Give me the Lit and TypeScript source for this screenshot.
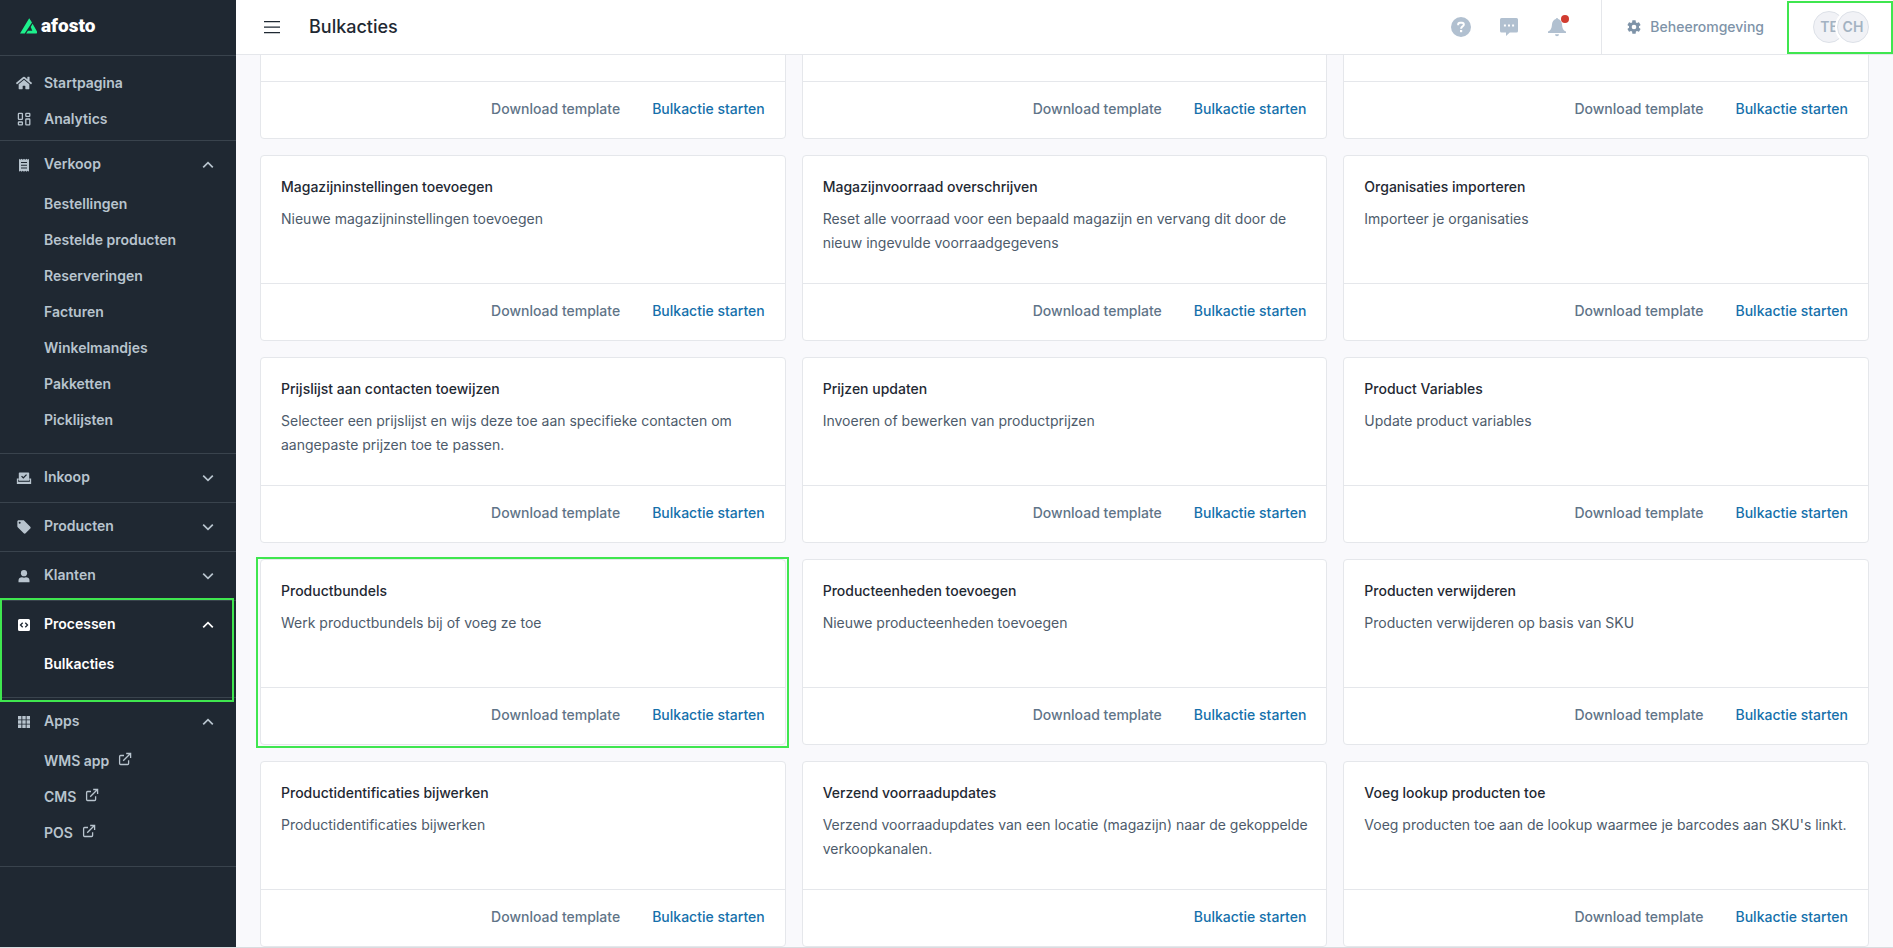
import { LitElement, html, css, svg, nothing } from "lit";
import { customElement, property } from "lit/decorators.js";
import { classMap } from "lit/directives/class-map.js";

const icons: Record<string, { box: string; art: unknown }> = {
  home: {
    box: "0 0 576 512",
    art: svg`<path fill="currentColor" d="M280.37 148.26L96 300.11V464a16 16 0 0 0 16 16l112.06-.29a16 16 0 0 0 15.92-16V368a16 16 0 0 1 16-16h64a16 16 0 0 1 16 16v95.64a16 16 0 0 0 16 16.05L464 480a16 16 0 0 0 16-16V300L295.67 148.26a12.19 12.19 0 0 0-15.3 0zM571.6 251.47L488 182.56V44.05a12 12 0 0 0-12-12h-56a12 12 0 0 0-12 12v72.61L318.47 43a48 48 0 0 0-61 0L4.34 251.47a12 12 0 0 0-1.6 16.9l25.5 31A12 12 0 0 0 45.15 301l235.22-193.74a12.19 12.19 0 0 1 15.3 0L530.9 301a12 12 0 0 0 16.9-1.6l25.5-31a12 12 0 0 0-1.7-16.93z"/>`,
  },
  dashboard: {
    box: "0 0 16 16",
    art: svg`<g fill="none" stroke="currentColor" stroke-width="1.3"><rect x="2.4" y="2.4" width="4" height="6" rx=".6"/><rect x="9.8" y="2.4" width="4" height="3" rx=".6"/><rect x="2.4" y="11" width="4" height="2.8" rx=".6"/><rect x="9.8" y="8" width="4" height="5.8" rx=".6"/></g>`,
  },
  receipt: {
    box: "0 0 16 16",
    art: svg`<path fill="currentColor" fill-rule="evenodd" d="M3 1.8l1.25 1L5.5 1.8l1.25 1L8 1.8l1.25 1 1.25-1 1.25 1 1.25-1v12.9l-1.25-1-1.25 1-1.25-1-1.25 1-1.25-1-1.25 1-1.25-1-1.25 1zM5 5v1.1h6V5zm0 2.7v1.1h6V7.700zm0 2.700v1.100h6v-1.100z"/>`,
  },
  inbox: {
    box: "0 0 16 16",
    art: svg`<path fill="currentColor" fill-rule="evenodd" d="M3.600 2.500h8.800a.8.8 0 0 1 .8.8v7.500H2.800V3.300a.8.8 0 0 1 .8-.8zm3.700 6.300l3.700-3.700-.9-.9-2.800 2.800-1.300-1.300-.9.9z"/><path fill="none" stroke="currentColor" stroke-width="1.300" d="M2.800 9.200H1.500v4.100h13V9.200h-1.300"/><path fill="currentColor" d="M1.500 11.800h13v1.500h-13z"/>`,
  },
  tag: {
    box: "0 0 24 24",
    art: svg`<path fill="currentColor" d="M5.500 7A1.500 1.500 0 1 1 5.500 4a1.500 1.500 0 0 1 0 3m15.910 4.580l-9-9C12.050 2.220 11.550 2 11 2H4c-1.110 0-2 .89-2 2v7c0 .55.220 1.050.590 1.410l9 9c.360.360.860.590 1.410.590s1.050-.230 1.410-.590l7-7c.370-.360.590-.860.590-1.410 0-.560-.230-1.060-.590-1.420"/>`,
  },
  user: {
    box: "0 0 16 16",
    art: svg`<circle cx="8" cy="5.200" r="3.100" fill="currentColor"/><path fill="currentColor" d="M2.500 14.200v-1.700c0-2 1.500-3.200 3.500-3.200.6.300 1.300.5 2 .5s1.400-.2 2-.5c2 0 3.500 1.200 3.500 3.200v1.700z"/>`,
  },
  code: {
    box: "0 0 16 16",
    art: svg`<path fill="currentColor" d="M3.500 2h9A1.500 1.500 0 0 1 14 3.500v9a1.500 1.500 0 0 1-1.500 1.500h-9A1.500 1.500 0 0 1 2 12.500v-9A1.500 1.500 0 0 1 3.500 2z"/><path fill="none" stroke="#1f2832" stroke-width="1.300" d="M6.700 5.800L4.500 8l2.200 2.200M9.300 5.800L11.500 8l-2.200 2.200"/>`,
  },
  grid: {
    box: "0 0 16 16",
    art: svg`<path fill="currentColor" d="M2 2h3.400v3.400H2zm4.300 0h3.400v3.400H6.300zm4.300 0H14v3.400h-3.400zM2 6.300h3.400v3.400H2zm4.300 0h3.400v3.400H6.300zm4.300 0H14v3.400h-3.400zM2 10.600h3.400V14H2zm4.300 0h3.400V14H6.300zm4.300 0H14V14h-3.400z"/>`,
  },
  up: {
    box: "0 0 16 16",
    art: svg`<path fill="none" stroke="currentColor" stroke-width="1.700" d="M3.200 10.400L8 5.600l4.800 4.800"/>`,
  },
  down: {
    box: "0 0 16 16",
    art: svg`<path fill="none" stroke="currentColor" stroke-width="1.700" d="M3.200 5.600L8 10.400l4.800-4.800"/>`,
  },
  external: {
    box: "0 0 16 16",
    art: svg`<path fill="none" stroke="currentColor" stroke-width="1.300" d="M7 4.500H3.600a1 1 0 0 0-1 1v7a1 1 0 0 0 1 1h7a1 1 0 0 0 1-1V9.200M6.200 9.800l7-7M9.200 2.500h4.400v4.400"/>`,
  },
  help: {
    box: "0 0 20 20",
    art: svg`<circle cx="10" cy="10" r="10" fill="currentColor"/><path fill="none" stroke="#fff" stroke-width="2" d="M7.200 8.200V7.300C7.200 6.300 8 5.700 9 5.700h2c1 0 1.800.7 1.800 1.700 0 .9-.4 1.300-1.100 1.800-1 .7-1.600 1-1.600 2.600"/><path fill="#fff" d="M9 13h2.200v2.200H9z"/>`,
  },
  chat: {
    box: "0 0 20 20",
    art: svg`<path fill="currentColor" fill-rule="evenodd" d="M2.500 1h15A1.500 1.500 0 0 1 19 2.500v11.400a1.500 1.500 0 0 1-1.500 1.500h-6.700L7 19v-3.600H2.500A1.500 1.500 0 0 1 1 13.900V2.500A1.500 1.500 0 0 1 2.500 1zM4.900 7.400v2h2v-2zm4.100 0v2h2v-2zm4.100 0v2h2v-2z"/>`,
  },
  bell: {
    box: "0 0 20 20",
    art: svg`<path fill="currentColor" d="M8.800 1.900a1.250 1.250 0 0 1 2.400 0c2.300.8 3.500 2.700 3.800 5.300.3 3.800 1 6 4 7.300V16H1v-1.500c3-1.300 3.700-3.500 4-7.300.3-2.600 1.500-4.500 3.800-5.300zM8 17.200h4a2 2 0 0 1-4 0z"/>`,
  },
  gear: {
    box: "0 0 24 24",
    art: svg`<path fill="currentColor" d="M12 15.500A3.500 3.500 0 0 1 8.500 12 3.500 3.500 0 0 1 12 8.500a3.500 3.500 0 0 1 3.500 3.500 3.500 3.500 0 0 1-3.500 3.500m7.430-2.530c.040-.320.070-.640.070-.970s-.030-.660-.070-1l2.110-1.630c.190-.150.240-.420.120-.640l-2-3.460c-.120-.220-.390-.310-.610-.220l-2.490 1c-.520-.390-1.060-.730-1.690-.980l-.370-2.650A.506.506 0 0 0 14 2h-4c-.250 0-.460.180-.5.420l-.370 2.650c-.630.250-1.170.590-1.690.980l-2.490-1c-.220-.090-.490 0-.610.220l-2 3.460c-.130.220-.070.490.120.640L4.570 11c-.040.340-.070.670-.070 1s.030.650.070.970l-2.110 1.660c-.190.150-.250.420-.120.640l2 3.460c.120.220.390.300.610.220l2.490-1.010c.520.400 1.060.740 1.690.990l.370 2.650c.040.240.250.420.5.420h4c.250 0 .460-.180.5-.420l.370-2.650c.630-.260 1.170-.590 1.690-.990l2.490 1.010c.220.080.490 0 .610-.220l2-3.460c.120-.220.070-.490-.120-.640z"/>`,
  },
  menu: {
    box: "0 0 16 16",
    art: svg`<path fill="currentColor" d="M0 2h16v1.300H0zm0 5.500h16v1.300H0zM0 13h16v1.300H0z"/>`,
  },
};

const glyph = (name: string, size = "") =>
  svg`<svg class="icon ${size}" viewBox=${icons[name].box} aria-hidden="true">${icons[name].art}</svg>`;

const iconStyles = css`
  .icon {
    display: block;
    flex: none;
    width: 16px;
    height: 16px;
  }
  .icon.lg {
    width: 20px;
    height: 20px;
  }
`;

interface NavGroup {
  label: string;
  icon: string;
  items?: string[];
  active?: boolean;
  external?: boolean;
}

const groups: NavGroup[] = [
  {
    label: "Verkoop",
    icon: "receipt",
    items: ["Bestellingen", "Bestelde producten", "Reserveringen", "Facturen", "Winkelmandjes", "Pakketten", "Picklijsten"],
  },
  { label: "Inkoop", icon: "inbox" },
  { label: "Producten", icon: "tag" },
  { label: "Klanten", icon: "user" },
  { label: "Processen", icon: "code", items: ["Bulkacties"], active: true },
  { label: "Apps", icon: "grid", items: ["WMS app", "CMS", "POS"], external: true },
];

interface BulkAction {
  title: string;
  text: string;
  template?: boolean;
  marked?: boolean;
}

const blank: BulkAction = { title: "", text: "" };

const actions: BulkAction[] = [
  blank,
  blank,
  blank,
  { title: "Magazijninstellingen toevoegen", text: "Nieuwe magazijninstellingen toevoegen" },
  {
    title: "Magazijnvoorraad overschrijven",
    text: "Reset alle voorraad voor een bepaald magazijn en vervang dit door de nieuw ingevulde voorraadgegevens",
  },
  { title: "Organisaties importeren", text: "Importeer je organisaties" },
  {
    title: "Prijslijst aan contacten toewijzen",
    text: "Selecteer een prijslijst en wijs deze toe aan specifieke contacten om aangepaste prijzen toe te passen.",
  },
  { title: "Prijzen updaten", text: "Invoeren of bewerken van productprijzen" },
  { title: "Product Variables", text: "Update product variables" },
  { title: "Productbundels", text: "Werk productbundels bij of voeg ze toe", marked: true },
  { title: "Producteenheden toevoegen", text: "Nieuwe producteenheden toevoegen" },
  { title: "Producten verwijderen", text: "Producten verwijderen op basis van SKU" },
  { title: "Productidentificaties bijwerken", text: "Productidentificaties bijwerken" },
  {
    title: "Verzend voorraadupdates",
    text: "Verzend voorraadupdates van een locatie (magazijn) naar de gekoppelde verkoopkanalen.",
    template: false,
  },
  { title: "Voeg lookup producten toe", text: "Voeg producten toe aan de lookup waarmee je barcodes aan SKU's linkt." },
];

@customElement("side-nav")
export class SideNav extends LitElement {
  static styles = [
    iconStyles,
    css`
      :host {
        display: block;
        background: #1f2832;
        color: #b8c4ce;
        font-size: 14px;
        font-weight: 600;
        line-height: 24px;
        overflow: hidden;
      }
      .brand {
        display: flex;
        align-items: center;
        gap: 4px;
        height: 51px;
        padding: 0 20px 4px;
        border-bottom: 1px solid #39434d;
        color: #fff;
        text-decoration: none;
      }
      .mark {
        width: 17px;
        height: 16px;
      }
      .word {
        font: 900 19px/24px Roboto, sans-serif;
      }
      .group {
        border-bottom: 1px solid #39434d;
        position: relative;
      }
      .top {
        padding: 9px 0 3px;
      }
      .link {
        display: flex;
        align-items: center;
        gap: 12px;
        height: 36px;
        padding: 0 20px 0 16px;
        color: inherit;
        text-decoration: none;
      }
      .head {
        display: flex;
        align-items: center;
        gap: 12px;
        width: 100%;
        margin: 0;
        padding: 12px 20px 12px 16px;
        border: 0;
        background: none;
        color: inherit;
        font: inherit;
        text-align: left;
      }
      .open .head {
        padding-bottom: 9px;
      }
      .label {
        flex: 1;
        padding-bottom: 2px;
        line-height: 22px;
      }
      .list {
        margin: 0;
        padding: 0 0 15px;
        list-style: none;
      }
      .sub {
        display: flex;
        align-items: center;
        gap: 8px;
        height: 36px;
        padding-left: 44px;
        color: inherit;
        text-decoration: none;
      }
      .sub .icon {
        margin-bottom: 4px;
      }
      .active {
        color: #fff;
      }
      .frame {
        position: absolute;
        inset: -3px 2px -5px 0;
        border: 2px solid #3fe64f;
        pointer-events: none;
        z-index: 1;
      }
    `,
  ];

  private group(g: NavGroup) {
    const open = !!g.items;
    return html`<div class=${classMap({ group: true, open, active: !!g.active })}>
      <button class="head" type="button" aria-expanded=${open}>
        ${glyph(g.icon)}<span class="label">${g.label}</span>${glyph(open ? "up" : "down")}
      </button>
      ${open
        ? html`<ul class="list">
            ${g.items!.map(
              (item) => html`<li><a class="sub" href="#">${item}${g.external ? glyph("external") : nothing}</a></li>`
            )}
          </ul>`
        : nothing}
      ${g.active ? html`<div class="frame"></div>` : nothing}
    </div>`;
  }

  render() {
    return html`
      <a class="brand" href="#">
        <svg class="mark" viewBox="0 0 17 16" aria-hidden="true">
          <path fill="#1df08c" d="M9.200.3L12 4.600 4.700 15.600H0zM12.600 5.700L17 13.400c.5 1.200-.1 2.200-1.400 2.200H6.200l1.700-2.900h4.400L10.700 9z" />
        </svg>
        <span class="word">afosto</span>
      </a>
      <nav>
        <div class="group top">
          <a class="link" href="#">${glyph("home")}Startpagina</a>
          <a class="link" href="#">${glyph("dashboard")}Analytics</a>
        </div>
        ${groups.map((g) => this.group(g))}
      </nav>
    `;
  }
}

@customElement("top-bar")
export class TopBar extends LitElement {
  static styles = [
    iconStyles,
    css`
      :host {
        display: flex;
        align-items: stretch;
        height: 54px;
        background: #fff;
        border-bottom: 1px solid #e5e7eb;
        color: #1f2933;
      }
      button,
      a {
        display: flex;
        align-items: center;
        margin: 0;
        padding: 0;
        border: 0;
        background: none;
        color: inherit;
        font: inherit;
        text-decoration: none;
      }
      .menu {
        padding: 0 29px 0 28px;
      }
      .title {
        flex: 1;
        margin: 0;
        font-size: 18px;
        font-weight: 500;
        line-height: 53px;
      }
      .tools {
        display: flex;
        align-items: center;
        gap: 24px;
        padding-right: 32px;
        color: #b1c0d0;
      }
      .tool {
        position: relative;
        justify-content: center;
        width: 24px;
        height: 24px;
      }
      .dot {
        position: absolute;
        top: 0;
        right: 0;
        width: 8px;
        height: 8px;
        border-radius: 50%;
        background: #d13c30;
      }
      .admin {
        gap: 8px;
        padding: 0 24px;
        border-left: 1px solid #e5e7eb;
        color: #7e93a8;
        font-size: 14px;
        font-weight: 500;
      }
      .admin-label {
        padding-bottom: 2px;
      }
      .account {
        position: relative;
        padding: 0 24px 0 25px;
      }
      .avatar {
        display: grid;
        place-items: center;
        box-sizing: border-box;
        width: 32px;
        height: 32px;
        padding-bottom: 2px;
        border: 1px solid #dde1e8;
        border-radius: 50%;
        background: #f1f2f6;
        color: #a3b2c2;
        font-size: 14px;
        font-weight: 600;
      }
      .avatar + .avatar {
        margin-left: -8px;
        box-shadow: 0 0 0 2px #fff;
      }
      .frame {
        position: absolute;
        inset: 1px 0 0 -1px;
        border: 2px solid #3fe64f;
        pointer-events: none;
      }
    `,
  ];

  render() {
    return html`
      <button class="menu" type="button" aria-label="Menu">${glyph("menu")}</button>
      <h1 class="title">Bulkacties</h1>
      <div class="tools">
        <button class="tool" type="button" aria-label="Help">${glyph("help", "lg")}</button>
        <button class="tool" type="button" aria-label="Chat">${glyph("chat", "lg")}</button>
        <button class="tool" type="button" aria-label="Meldingen">${glyph("bell", "lg")}<span class="dot"></span></button>
      </div>
      <a class="admin" href="#">${glyph("gear")}<span class="admin-label">Beheeromgeving</span></a>
      <button class="account" type="button">
        <span class="avatar">TE</span><span class="avatar">CH</span>
        <span class="frame"></span>
      </button>
    `;
  }
}

@customElement("bulk-card")
export class BulkCard extends LitElement {
  @property({ attribute: false }) action!: BulkAction;

  static styles = css`
    :host {
      display: flex;
      flex-direction: column;
      position: relative;
      box-sizing: border-box;
      border: 1px solid #e5e7eb;
      border-radius: 4px;
      background: #fff;
      font-size: 14px;
      line-height: 24px;
    }
    .body {
      flex: 1;
      min-height: 88px;
      padding: 19px 12px 20px 20px;
    }
    .title {
      margin: 0 0 8px;
      font-size: 14px;
      font-weight: 500;
      line-height: 24px;
      color: #1f2933;
    }
    .text {
      margin: 0;
      color: #4d5b6b;
    }
    .foot {
      display: flex;
      justify-content: flex-end;
      gap: 32px;
      padding: 15px 20px 17px;
      border-top: 1px solid #e5e7eb;
    }
    .btn {
      margin: 0;
      padding: 0;
      border: 0;
      background: none;
      color: #5f7488;
      font: inherit;
      font-weight: 500;
      text-decoration: none;
    }
    .primary {
      color: #1570ab;
    }
    .frame {
      position: absolute;
      inset: -3px -4px -4px -5px;
      border: 2px solid #3fe64f;
      pointer-events: none;
    }
  `;

  render() {
    const a = this.action;
    return html`
      <div class="body">
        ${a.title ? html`<h2 class="title">${a.title}</h2>` : nothing}
        ${a.text ? html`<p class="text">${a.text}</p>` : nothing}
      </div>
      <div class="foot">
        ${a.template === false ? nothing : html`<a class="btn" href="#">Download template</a>`}
        <button class="btn primary" type="button">Bulkactie starten</button>
      </div>
      ${a.marked ? html`<div class="frame"></div>` : nothing}
    `;
  }
}

@customElement("app-root")
export class AppRoot extends LitElement {
  static styles = css`
    :host {
      display: grid;
      grid-template-columns: 236px minmax(0, 1fr);
      height: 100vh;
      box-sizing: border-box;
      border-bottom: 1px solid #d9dde0;
      overflow: hidden;
      font-family: Inter, "Liberation Sans", sans-serif;
    }
    .page {
      display: flex;
      flex-direction: column;
      min-height: 0;
      background: #f9f9fc;
    }
    .cards {
      flex: 1;
      min-height: 0;
      display: grid;
      grid-template-columns: repeat(3, minmax(0, 1fr));
      grid-auto-rows: max-content;
      align-content: end;
      gap: 16px;
      padding: 0 24px;
      overflow: hidden;
    }
  `;

  render() {
    return html`
      <side-nav></side-nav>
      <div class="page">
        <top-bar></top-bar>
        <main class="cards">${actions.map((action) => html`<bulk-card .action=${action}></bulk-card>`)}</main>
      </div>
    `;
  }
}
